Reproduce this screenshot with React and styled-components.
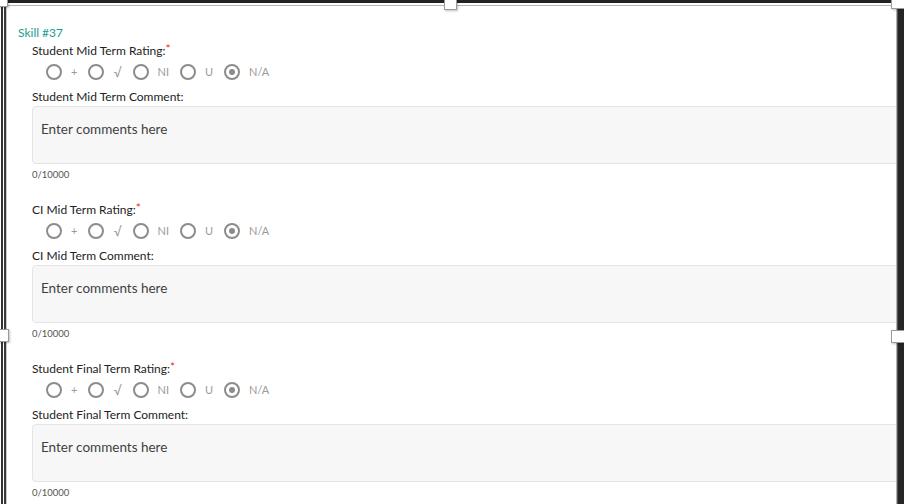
import React from "react";
import styled, { createGlobalStyle } from "styled-components";

const GlobalStyle = createGlobalStyle`
  html, body {
    margin: 0;
    padding: 0;
    background: #ffffff;
  }
  body {
    font-family: Lato, "Liberation Sans", sans-serif;
    color: #333;
  }
`;

const Frame = styled.div`
  position: relative;
  width: 904px;
  height: 504px;
  overflow: hidden;
  background: #fff;
  box-sizing: border-box;
  padding: 25px 0 0 18px;
  display: flex;
  flex-direction: column;
  gap: 21px;

  &::after {
    content: "";
    position: absolute;
    inset: 0;
    pointer-events: none;
    box-shadow: inset 0 3px 0 #232323, inset 0 5px 0 #fff, inset 0 6px 0 #b5b5b5,
      inset 1px 0 0 #fff, inset 3px 0 0 #333, inset 4px 0 0 #fff,
      inset 6px 0 0 #3a3a3a, inset 7px 0 0 #c8c8c8,
      inset -6px 0 0 #262626, inset -7px 0 0 #555, inset -8px 0 0 #b0b0b0;
  }
`;

const Handle = styled.div`
  position: absolute;
  width: ${(p) => p.$w || 11}px;
  height: ${(p) => p.$h || 11}px;
  background: #fff;
  border: 1px solid #9a9a9a;
  box-shadow: 1px 1px 2px rgba(0, 0, 0, 0.25);
  z-index: 2;
`;

const Skill = styled.div`
  display: flex;
  flex-direction: column;
`;

const SkillTitle = styled.div`
  color: #1a9c8b;
  font-size: 12px;
  line-height: 16px;
  margin-bottom: 2px;
`;

const Section = styled.div`
  display: flex;
  flex-direction: column;
  align-items: flex-start;
  padding-left: 14px;
`;

const FieldLabel = styled.div`
  font-size: 12px;
  line-height: 16px;
  color: #222;
  white-space: nowrap;
`;

const Required = styled.span`
  color: #e0332d;
  vertical-align: top;
  font-size: 12px;
  line-height: 12px;
`;

const RadioRow = styled.div`
  display: flex;
  align-items: center;
  gap: 11px;
  margin: 5px 0 0 14px;
  height: 16px;
`;

const RadioItem = styled.label`
  display: flex;
  align-items: center;
  gap: 9px;
`;

const Circle = styled.span`
  width: 16px;
  height: 16px;
  box-sizing: border-box;
  border: 2px solid #8c8c8c;
  border-radius: 50%;
  display: flex;
  align-items: center;
  justify-content: center;

  &::after {
    content: "";
    width: 6px;
    height: 6px;
    border-radius: 50%;
    background: #8c8c8c;
    display: ${(p) => (p.$checked ? "block" : "none")};
  }
`;

const RadioText = styled.span`
  font-size: ${(p) => (p.$big ? 13 : 11)}px;
  color: #9a9a9a;
  line-height: 16px;
`;

const CommentLabel = styled(FieldLabel)`
  margin-top: 9px;
`;

const CommentBox = styled.div`
  margin-top: 1px;
  width: 900px;
  height: 58px;
  box-sizing: border-box;
  background: #f7f7f7;
  border: 1px solid #e4e4e4;
  border-radius: 4px;
  padding: 13px 0 0 8px;
  font-size: 13.5px;
  line-height: 18px;
  color: #3f3f3f;
`;

const Counter = styled.div`
  margin-top: 5px;
  font-size: 9.5px;
  line-height: 12px;
  color: #555;
`;

const options = [
  { label: "+" },
  { label: "√", big: true },
  { label: "NI" },
  { label: "U" },
  { label: "N/A", checked: true },
];

const fields = [
  { rating: "Student Mid Term Rating:", comment: "Student Mid Term Comment:" },
  { rating: "CI Mid Term Rating:", comment: "CI Mid Term Comment:" },
  { rating: "Student Final Term Rating:", comment: "Student Final Term Comment:" },
];

function RatingField({ rating, comment }) {
  return (
    <Section>
      <FieldLabel>
        {rating}
        <Required>*</Required>
      </FieldLabel>
      <RadioRow>
        {options.map((o) => (
          <RadioItem key={o.label}>
            <Circle $checked={o.checked} />
            <RadioText $big={o.big}>{o.label}</RadioText>
          </RadioItem>
        ))}
      </RadioRow>
      <CommentLabel>{comment}</CommentLabel>
      <CommentBox>Enter comments here</CommentBox>
      <Counter>0/10000</Counter>
    </Section>
  );
}

export default function App() {
  return (
    <>
      <GlobalStyle />
      <Frame>
        <Handle style={{ left: -4, top: -5 }} $w={10} $h={10} />
        <Handle style={{ left: 444, top: -3 }} />
        <Handle style={{ left: 891, top: -4 }} $w={14} />
        <Handle style={{ left: -4, top: 329 }} />
        <Handle style={{ left: 891, top: 330 }} $w={14} />
        <Skill>
          <SkillTitle>Skill #37</SkillTitle>
          <RatingField {...fields[0]} />
        </Skill>
        {fields.slice(1).map((f) => (
          <RatingField key={f.rating} {...f} />
        ))}
      </Frame>
    </>
  );
}
